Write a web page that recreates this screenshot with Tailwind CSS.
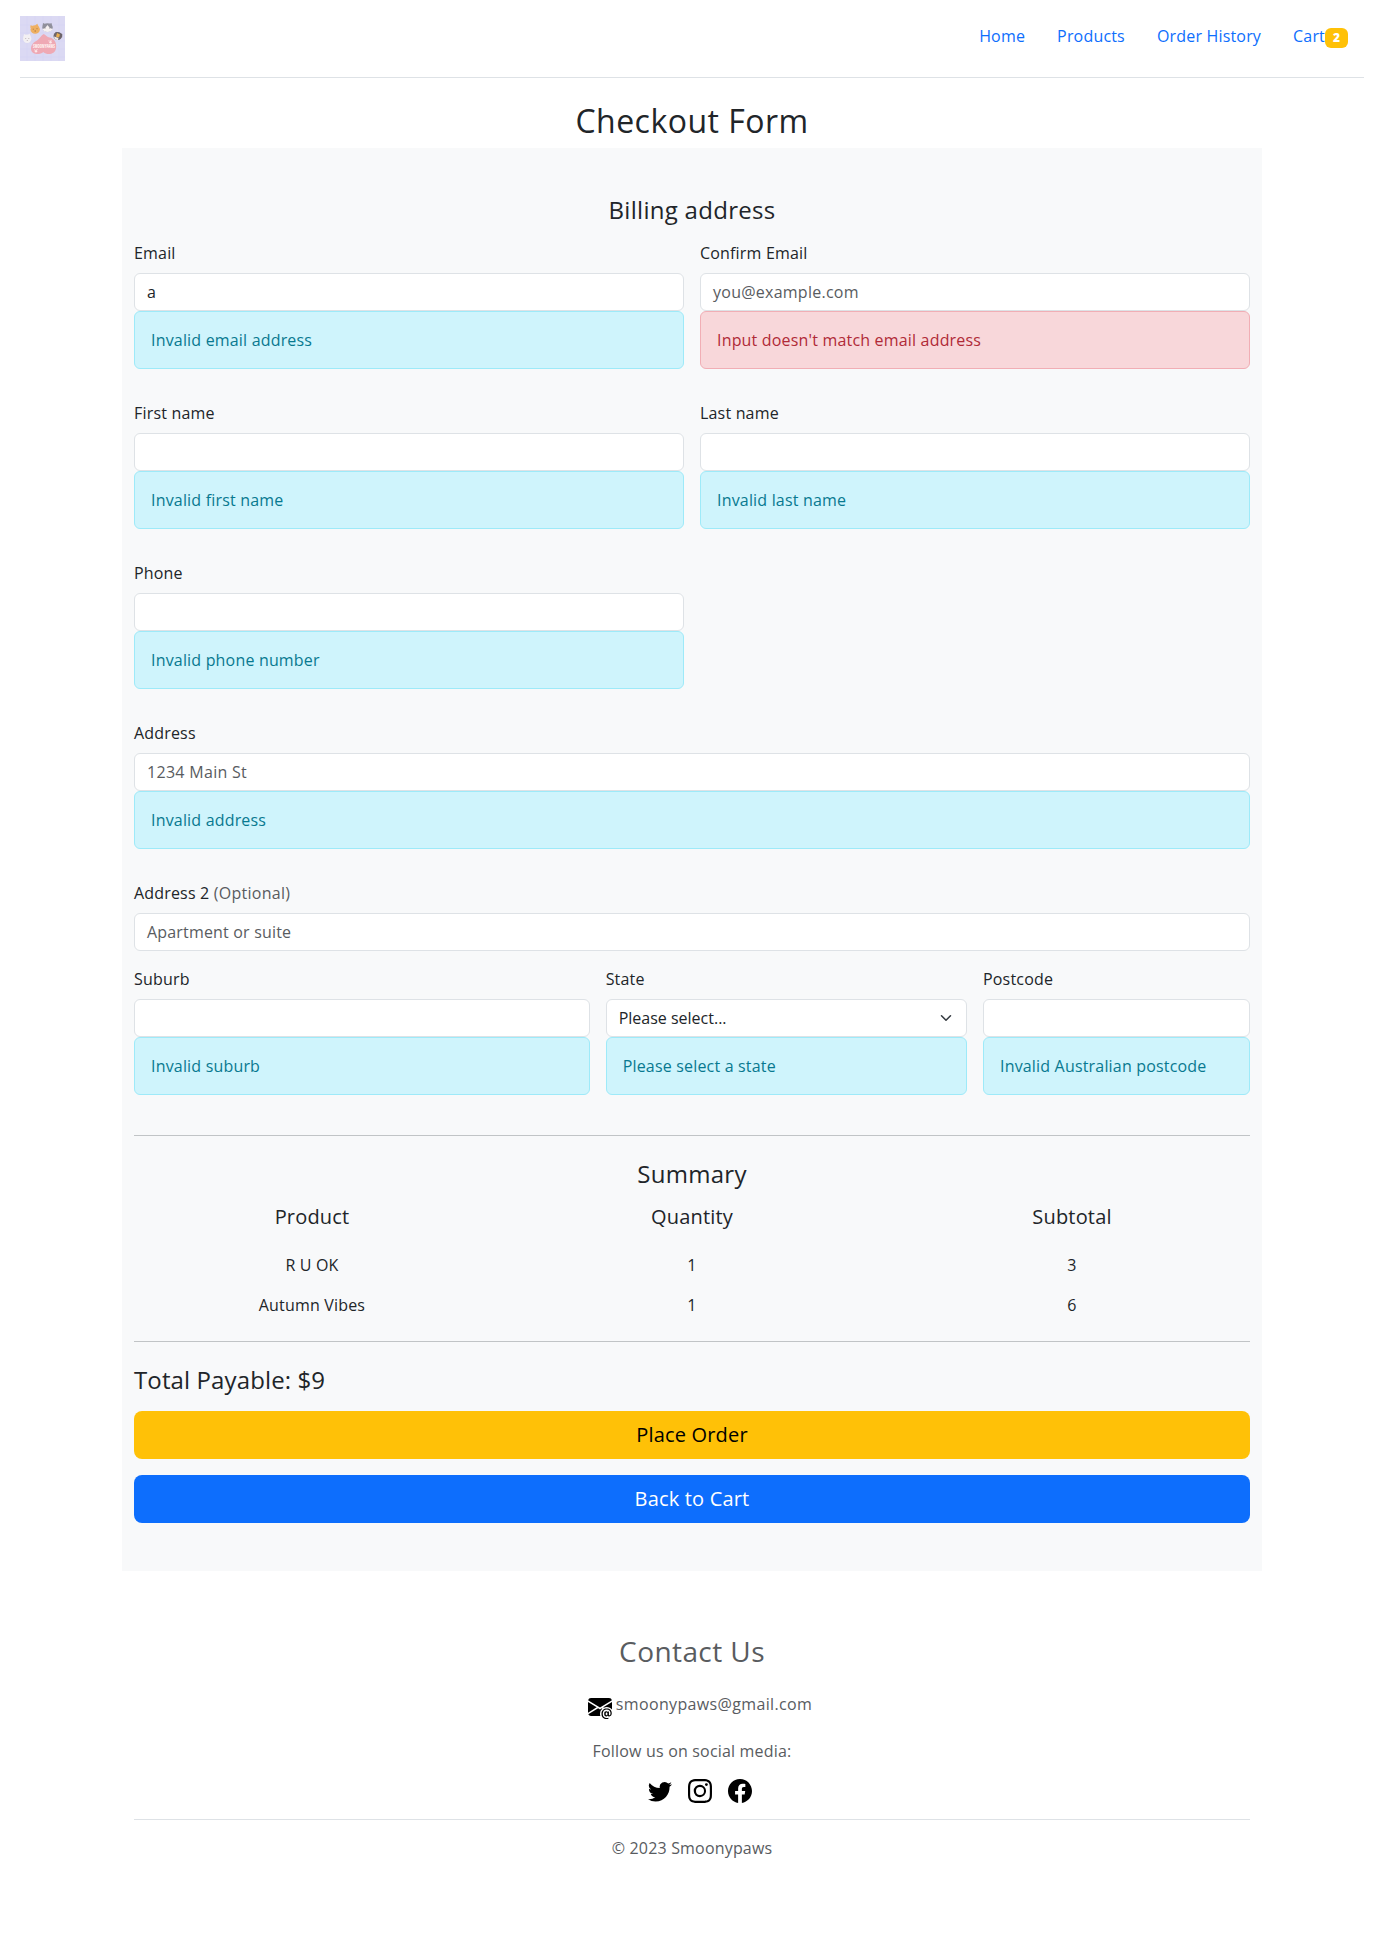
<!DOCTYPE html>
<html lang="en">
<head>
<meta charset="utf-8">
<title>Checkout Form</title>
<script src="https://cdn.jsdelivr.net/npm/@tailwindcss/browser@4"></script>
</head>
<body class="bg-white font-['Open_Sans',sans-serif] text-base tracking-[0.18px] text-[#212529]">
<header class="mx-5 flex h-[78px] items-start justify-between border-b border-[#dee2e6] pt-4">
  <svg class="size-[45px]" viewBox="0 0 45 45">
    <rect width="45" height="45" fill="#dbd9f3"/>
    <path d="M7 0v45M15 0v45M23 0v45M31 0v45M39 0v45M0 9h45M0 17h45M0 25h45M0 33h45M0 41h45" stroke="#d2d1f1" stroke-width=".5"/>
    <path d="M23.800 18C21 19.500 20 22.500 17 24.500C12 27 10.500 30.500 11.200 34C12 38.500 19.500 39.500 23.300 36C27 39.500 35 38.500 36 32.500C37 26 33.500 22 29.500 21.500C27 21.200 26 19 23.800 18z" fill="#efa9b4"/>
    <g fill="#f3f0f3"><circle cx="7.200" cy="22.800" r="4.200"/><path d="M3.500 21l.5-3 3 1.500zM7.500 19.500l2-2 1.300 3z"/></g>
    <path d="M5.200 22.500h1M8.300 22.500h1M6.800 24.500h1" stroke="#b0a5a5" stroke-width=".7"/>
    <g fill="#efb062"><ellipse cx="15.200" cy="13.500" rx="4.700" ry="4.300"/><path d="M10.300 12l.2-2.800 3.500 1zM15 9.500l2.300-1.800 1.500 3.300z"/></g>
    <path d="M12.800 13.200h1M16.500 12.700h1M14.500 15h1.500" stroke="#a06a36" stroke-width=".8"/>
    <g fill="#90909c"><ellipse cx="27.500" cy="11.500" rx="5.200" ry="4.200"/><path d="M22.500 10.500l.5-3.500 3.500 1.500zM28.500 8.200l3-1.200.8 4z"/></g>
    <path d="M22.500 13c2 0 4-2.500 5-4c1 1.500 3 4 5.200 4c-1.700 4-8.700 4-10.200 0z" fill="#f6f1f1"/>
    <path d="M24.500 12h1M29.300 12h1" stroke="#6d6870" stroke-width=".8"/>
    <g fill="#6d646a"><ellipse cx="37.800" cy="20" rx="4.300" ry="4"/><path d="M34 18.500l2-2.800 2.500 1.500zM40 17.500l2.300.5-.2 3.500z"/></g>
    <path d="M37 17l3 1.500-1 3-3-.8z" fill="#e9ad50"/><path d="M34 20.500l4.500 1.500-.5 2c-2 .2-3.800-1.200-4-3.500z" fill="#f1e8e5"/>
    <text x="24" y="32" text-anchor="middle" font-family="Open Sans, sans-serif" font-size="4.500" font-weight="800" letter-spacing="0" fill="#fff2f0" textLength="22" lengthAdjust="spacingAndGlyphs">SMOONYPAWS</text>
    <g fill="#fbe8ea"><circle cx="30.500" cy="26.300" r="1.200"/><circle cx="29" cy="24.800" r=".6"/><circle cx="31" cy="24.300" r=".6"/><circle cx="16" cy="35.200" r="1.200"/><circle cx="14.700" cy="33.800" r=".6"/><circle cx="17" cy="33.600" r=".6"/></g>
  </svg>
  <nav class="flex pt-2 pr-4 leading-6 text-[#0d6efd]">
    <a class="px-4">Home</a>
    <a class="px-4">Products</a>
    <a class="px-4">Order History</a>
    <a class="flex pl-4">Cart<span class="mt-1 flex h-5 w-[23px] items-center justify-center rounded-md bg-[#ffc107] text-xs font-extrabold text-white">2</span></a>
  </nav>
</header>

<h2 class="mt-6 mb-2 text-center text-[32px] leading-[38.4px] tracking-[0.015em]">Checkout Form</h2>

<main class="mx-auto w-[1140px] bg-[#f8f9fa] px-3 py-12">
  <h4 class="mb-4 text-center text-2xl leading-[28.8px] tracking-[0.012em]">Billing address</h4>
  <div class="grid grid-cols-2 gap-4 leading-6">
    <div>
      <div class="mb-2">Email</div>
      <div class="h-[38px] rounded-md border border-[#dee2e6] bg-white px-3 py-1.5">a</div>
      <div class="mb-4 rounded-md border border-[#9eeaf9] bg-[#cff4fc] p-4 text-[#087990]">Invalid email address</div>
    </div>
    <div>
      <div class="mb-2">Confirm Email</div>
      <div class="h-[38px] rounded-md border border-[#dee2e6] bg-white px-3 py-1.5 tracking-[0.25px] text-[#595c5f]">you@example.com</div>
      <div class="mb-4 rounded-md border border-[#f1aeb5] bg-[#f8d7da] p-4 text-[#b02a37]">Input doesn't match email address</div>
    </div>
    <div>
      <div class="mb-2">First name</div>
      <div class="h-[38px] rounded-md border border-[#dee2e6] bg-white"></div>
      <div class="mb-4 rounded-md border border-[#9eeaf9] bg-[#cff4fc] p-4 text-[#087990]">Invalid first name</div>
    </div>
    <div>
      <div class="mb-2">Last name</div>
      <div class="h-[38px] rounded-md border border-[#dee2e6] bg-white"></div>
      <div class="mb-4 rounded-md border border-[#9eeaf9] bg-[#cff4fc] p-4 text-[#087990]">Invalid last name</div>
    </div>
    <div>
      <div class="mb-2">Phone</div>
      <div class="h-[38px] rounded-md border border-[#dee2e6] bg-white"></div>
      <div class="mb-4 rounded-md border border-[#9eeaf9] bg-[#cff4fc] p-4 text-[#087990]">Invalid phone number</div>
    </div>
    <div class="col-span-2">
      <div class="mb-2">Address</div>
      <div class="h-[38px] rounded-md border border-[#dee2e6] bg-white px-3 py-1.5 tracking-[0.3px] text-[#595c5f]">1234 Main St</div>
      <div class="mb-4 rounded-md border border-[#9eeaf9] bg-[#cff4fc] p-4 text-[#087990]">Invalid address</div>
    </div>
    <div class="col-span-2">
      <div class="mb-2">Address 2 <span class="tracking-[0.28px] text-[#595c5f]">(Optional)</span></div>
      <div class="h-[38px] rounded-md border border-[#dee2e6] bg-white px-3 py-1.5 text-[#595c5f]">Apartment or suite</div>
    </div>
    <div class="col-span-2 grid grid-cols-[455.67px_361.33px_1fr] gap-4">
      <div>
        <div class="mb-2">Suburb</div>
        <div class="h-[38px] rounded-md border border-[#dee2e6] bg-white"></div>
        <div class="mb-4 rounded-md border border-[#9eeaf9] bg-[#cff4fc] p-4 text-[#087990]">Invalid suburb</div>
      </div>
      <div>
        <div class="mb-2">State</div>
        <div class="flex h-[38px] items-center justify-between rounded-md border border-[#dee2e6] bg-white px-3"><span class="tracking-normal">Please select...</span>
          <svg class="h-3 w-4" viewBox="0 0 16 16" fill="none" stroke="#343a40" stroke-linecap="round" stroke-linejoin="round" stroke-width="2"><path d="m2 5 6 6 6-6"/></svg>
        </div>
        <div class="mb-4 rounded-md border border-[#9eeaf9] bg-[#cff4fc] p-4 text-[#087990]">Please select a state</div>
      </div>
      <div>
        <div class="mb-2">Postcode</div>
        <div class="h-[38px] rounded-md border border-[#dee2e6] bg-white"></div>
        <div class="mb-4 rounded-md border border-[#9eeaf9] bg-[#cff4fc] p-4 text-[#087990]">Invalid Australian postcode</div>
      </div>
    </div>
  </div>

  <hr class="my-6 border-[#c1c4c6]">
  <h4 class="mb-4 text-center text-2xl leading-[28.8px] tracking-[0.012em]">Summary</h4>
  <div class="-mx-3 grid grid-cols-3 text-center leading-6">
    <h5 class="text-xl leading-6 font-medium">Product</h5>
    <h5 class="text-xl leading-6 font-medium">Quantity</h5>
    <h5 class="text-xl leading-6 font-medium">Subtotal</h5>
    <div class="mt-6">R U OK</div><div class="mt-6">1</div><div class="mt-6">3</div>
    <div class="mt-4">Autumn Vibes</div><div class="mt-4">1</div><div class="mt-4">6</div>
  </div>
  <hr class="my-6 border-[#c1c4c6]">
  <h4 class="mb-4 text-2xl leading-[28.8px] tracking-[0.005em]">Total Payable: $9</h4>
  <button class="mb-4 block h-12 w-full rounded-lg bg-[#ffc107] text-xl text-black">Place Order</button>
  <button class="block h-12 w-full rounded-lg bg-[#0d6efd] text-xl font-medium text-white">Back to Cart</button>
</main>

<footer class="mx-auto mt-16 w-[1116px] text-center leading-6 text-[#595c5f]">
  <h3 class="text-[28px] leading-[33.6px] tracking-[0.015em]">Contact Us</h3>
  <div class="mt-6 flex justify-center gap-1 pl-4">
    <svg class="mt-[3px] size-6 fill-black" viewBox="0 0 16 16"><path d="M2 2A2 2 0 0 0 .05 3.555L8 8.414l7.950-4.859A2 2 0 0 0 14 2zm-2 2.698v7.101l5.803-3.558zm6.761 4.097-6.570 4.026A2 2 0 0 0 2 14h6.256A4.500 4.500 0 0 1 8 12.500a4.490 4.490 0 0 1 1.606-3.446l-.367-.225L8 9.586zM16 9.671V4.697l-5.803 3.546.338.208A4.500 4.500 0 0 1 12.500 8c1.414 0 2.675.652 3.500 1.671"/><path d="M15.834 12.244c0 1.168-.577 2.025-1.587 2.025-.503 0-1.002-.228-1.120-.648h-.043c-.118.416-.543.643-1.015.643-.770 0-1.259-.542-1.259-1.434v-.529c0-.844.481-1.400 1.260-1.400.585 0 .870.333.953.630h.030v-.568h.905v2.190c0 .272.180.420.411.420.315 0 .639-.415.639-1.390v-.118c0-1.277-.950-2.326-2.484-2.326h-.040c-1.582 0-2.640 1.067-2.640 2.724v.157c0 1.867 1.237 2.654 2.570 2.654h.045c.507 0 .935-.070 1.180-.180v.731c-.219.100-.643.175-1.237.175h-.044C10.438 16 9 14.820 9 12.646v-.214C9 10.360 10.421 9 12.485 9h.035c2.120 0 3.314 1.430 3.314 3.034zm-4.040.210v.227c0 .586.227.800.581.800.310 0 .564-.170.564-.743v-.367c0-.516-.275-.708-.572-.708-.346 0-.573.245-.573.791"/></svg>
    <span class="tracking-[0.35px]">smoonypaws@gmail.com</span>
  </div>
  <p class="mt-5">Follow us on social media:</p>
  <div class="mt-4 flex justify-center gap-4 pl-4">
    <svg class="size-6 fill-black" viewBox="0 0 16 16"><path d="M5.026 15c6.038 0 9.341-5.003 9.341-9.334q.002-.211-.006-.422A6.700 6.700 0 0 0 16 3.542a6.700 6.700 0 0 1-1.889.518 3.300 3.300 0 0 0 1.447-1.817 6.500 6.500 0 0 1-2.087.793A3.286 3.286 0 0 0 7.875 6.030a9.320 9.320 0 0 1-6.767-3.429 3.290 3.290 0 0 0 1.018 4.382A3.300 3.300 0 0 1 .640 6.575v.045a3.290 3.290 0 0 0 2.632 3.218 3.200 3.200 0 0 1-.865.115 3 3 0 0 1-.614-.057 3.280 3.280 0 0 0 3.067 2.277A6.600 6.600 0 0 1 .780 13.580a6 6 0 0 1-.780-.045A9.340 9.340 0 0 0 5.026 15"/></svg>
    <svg class="size-6 fill-black" viewBox="0 0 16 16"><path d="M8 0C5.829 0 5.556.010 4.703.048 3.850.088 3.269.222 2.760.420a3.900 3.900 0 0 0-1.417.923A3.900 3.900 0 0 0 .420 2.760C.222 3.268.087 3.850.048 4.700.010 5.555 0 5.827 0 8.001c0 2.172.010 2.444.048 3.297.040.852.174 1.433.372 1.942.205.526.478.972.923 1.417.444.445.890.719 1.416.923.510.198 1.090.333 1.942.372C5.555 15.990 5.827 16 8 16s2.444-.010 3.298-.048c.851-.040 1.434-.174 1.943-.372a3.900 3.900 0 0 0 1.416-.923c.445-.445.718-.891.923-1.417.197-.509.332-1.090.372-1.942C15.990 10.445 16 10.173 16 8s-.010-2.445-.048-3.299c-.040-.851-.175-1.433-.372-1.941a3.900 3.900 0 0 0-.923-1.417A3.900 3.900 0 0 0 13.240.420c-.510-.198-1.092-.333-1.943-.372C10.443.010 10.172 0 7.998 0zm-.717 1.442h.718c2.136 0 2.389.007 3.232.046.780.035 1.204.166 1.486.275.373.145.640.319.920.599s.453.546.598.920c.110.281.240.705.275 1.485.039.843.047 1.096.047 3.231s-.008 2.389-.047 3.232c-.035.780-.166 1.203-.275 1.485a2.500 2.500 0 0 1-.599.919c-.280.280-.546.453-.920.598-.280.110-.704.240-1.485.276-.843.038-1.096.047-3.232.047s-2.390-.009-3.233-.047c-.780-.036-1.203-.166-1.485-.276a2.500 2.500 0 0 1-.920-.598 2.500 2.500 0 0 1-.600-.920c-.109-.281-.240-.705-.275-1.485-.038-.843-.046-1.096-.046-3.233s.008-2.388.046-3.231c.036-.780.166-1.204.276-1.486.145-.373.319-.640.599-.920s.546-.453.920-.598c.282-.110.705-.240 1.485-.276.738-.034 1.024-.044 2.515-.045zm4.988 1.328a.960.960 0 1 0 0 1.920.960.960 0 0 0 0-1.920m-4.270 1.122a4.109 4.109 0 1 0 0 8.217 4.109 4.109 0 0 0 0-8.217m0 1.441a2.667 2.667 0 1 1 0 5.334 2.667 2.667 0 0 1 0-5.334"/></svg>
    <svg class="size-6 fill-black" viewBox="0 0 16 16"><path d="M16 8.049c0-4.446-3.582-8.050-8-8.050C3.580 0-.002 3.603-.002 8.050c0 4.017 2.926 7.347 6.750 7.951v-5.625h-2.030V8.050H6.750V6.275c0-2.017 1.195-3.131 3.022-3.131.876 0 1.791.157 1.791.157v1.980h-1.009c-.993 0-1.303.621-1.303 1.258v1.510h2.218l-.354 2.326H9.250V16c3.824-.604 6.750-3.934 6.750-7.951"/></svg>
  </div>
  <hr class="mt-4 mb-4 border-[#dee2e6]">
  <p>© 2023 Smoonypaws</p>
</footer>
</body>
</html>
